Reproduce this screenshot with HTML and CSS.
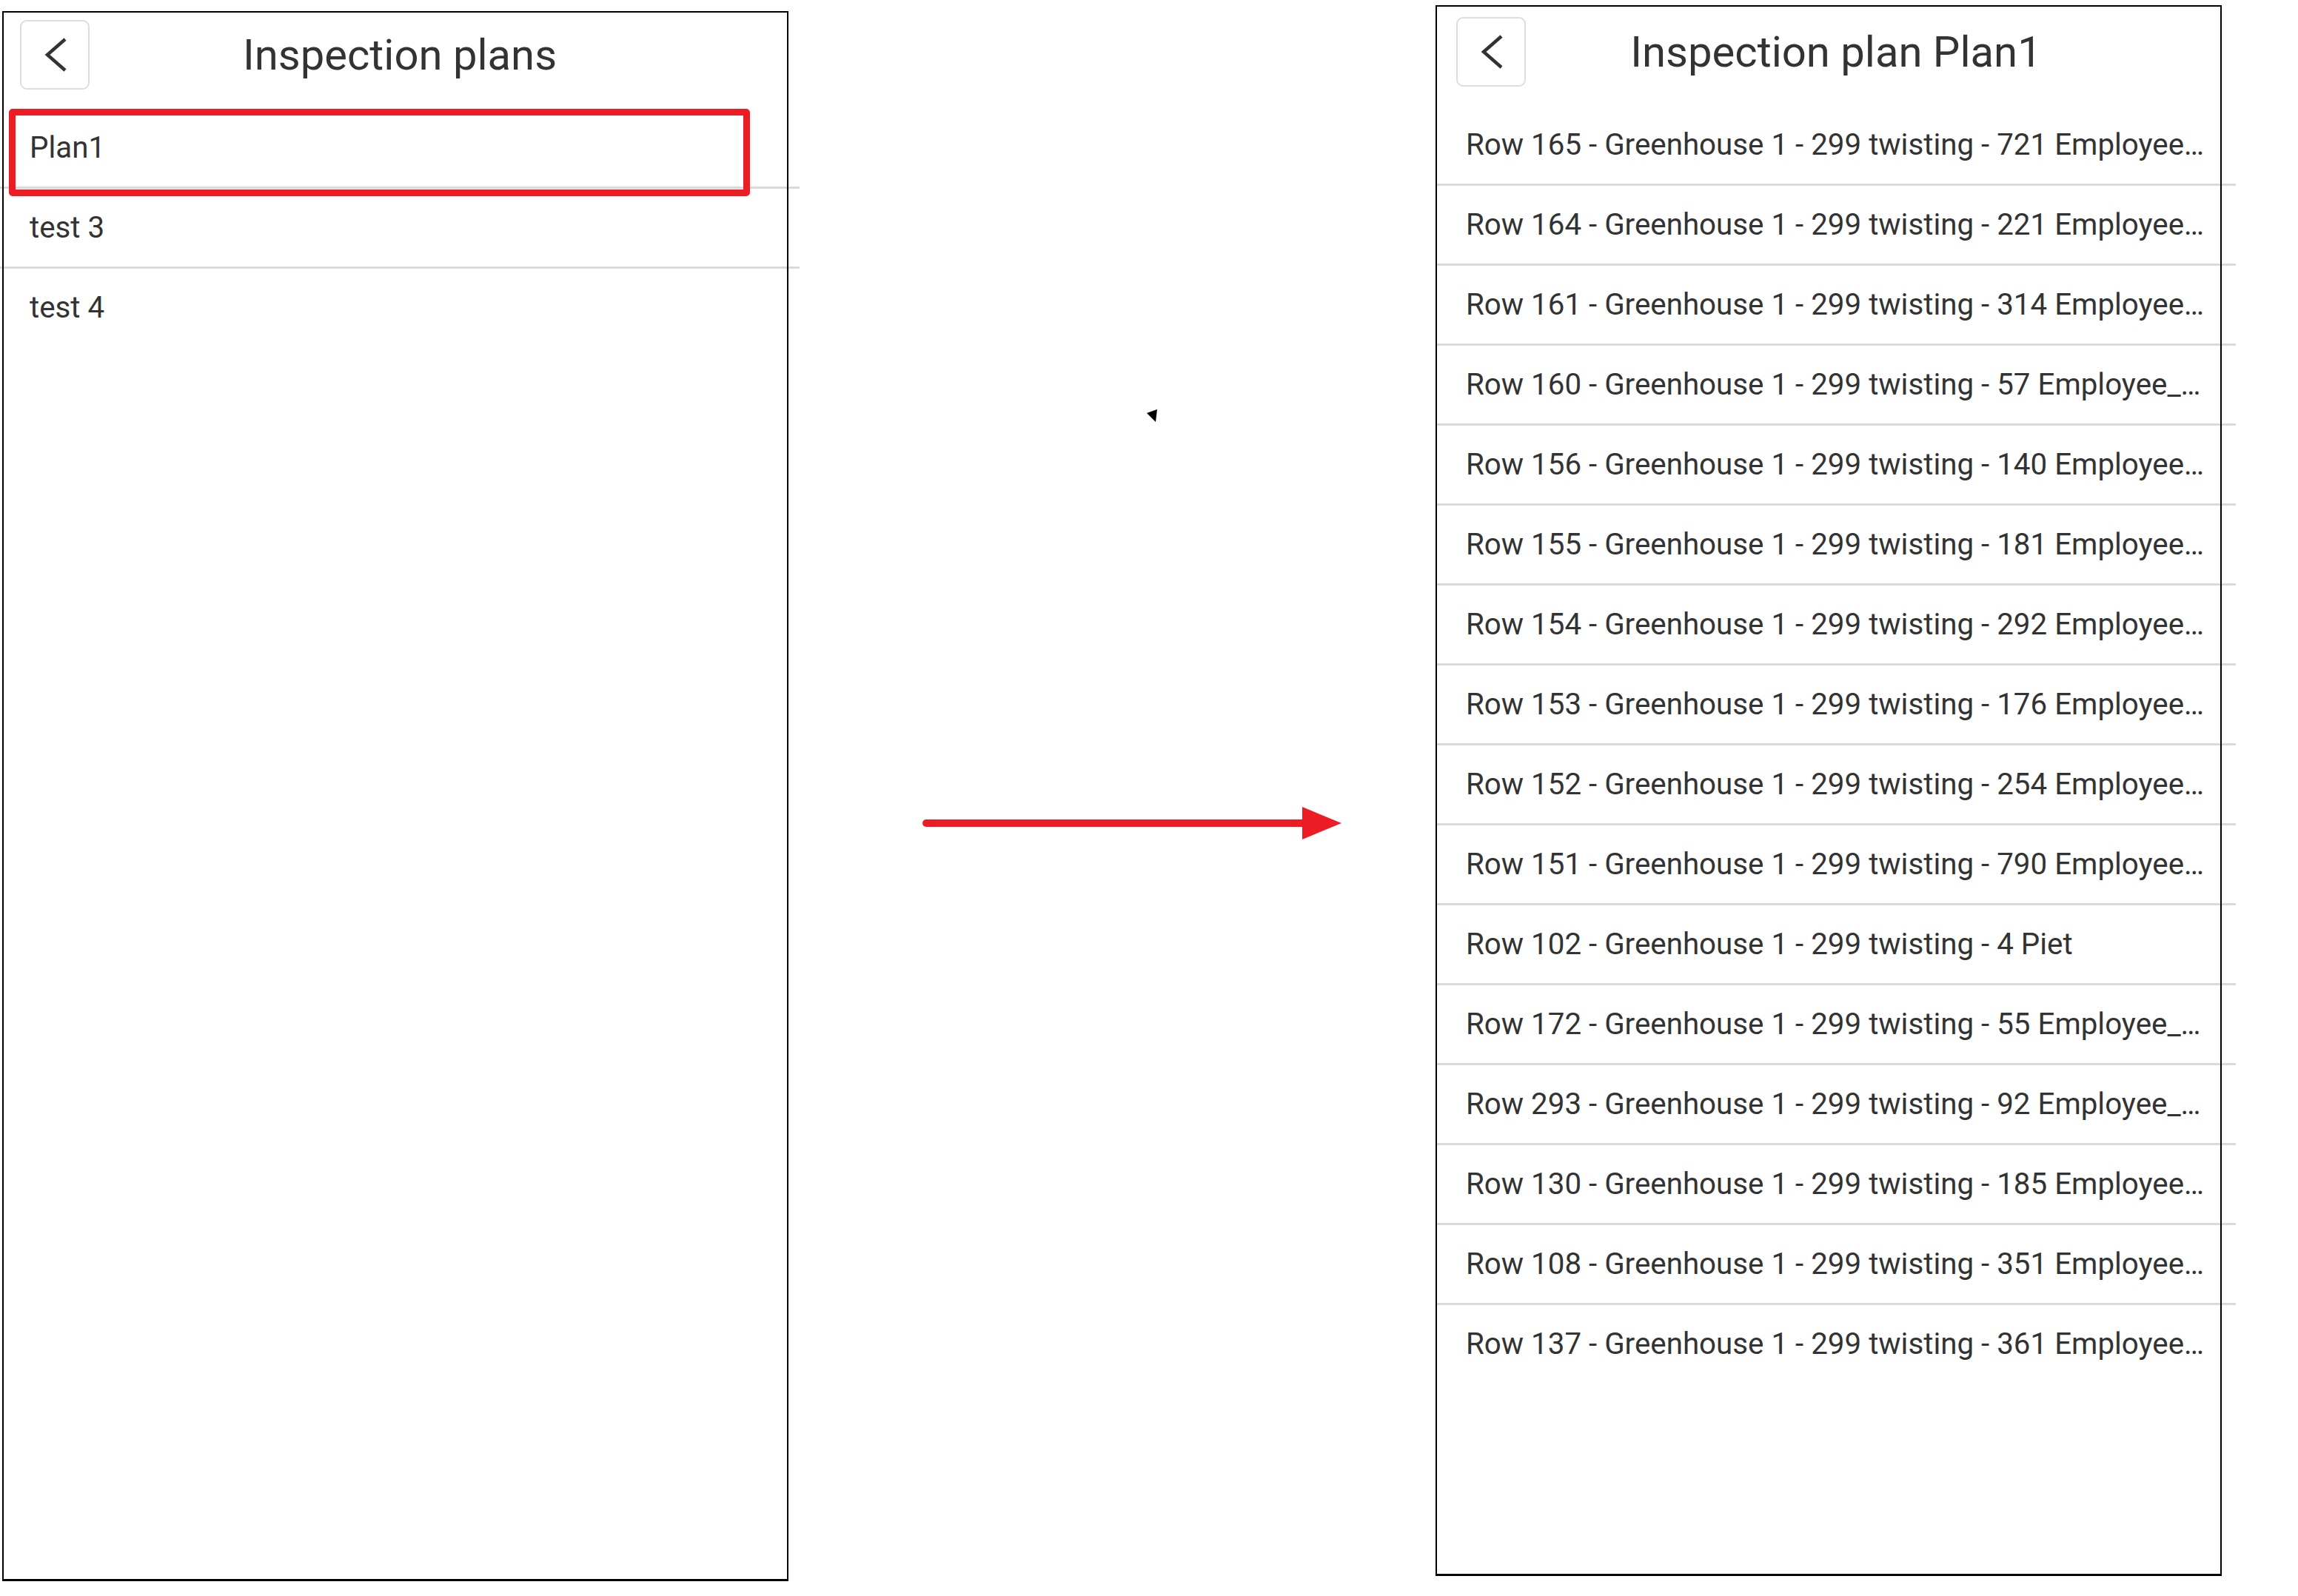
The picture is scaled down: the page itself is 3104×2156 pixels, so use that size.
FILE: index.html
```html
<!DOCTYPE html>
<html lang="en">
<head>
    <meta charset="UTF-8">
    <title>Inspection plans</title>
    <link rel="stylesheet" href="styles.css">
</head>
<body>
    <div class="stage">
        <div class="frame frame-left">
            <div class="screen">
                <div class="header">
                    <button class="back">
                        <svg viewBox="0 0 90 90" width="90" height="90"><polyline points="59,24 35,45 59,66" /></svg>
                    </button>
                    <h1>Inspection plans</h1>
                </div>
                <ul class="list">
                    <li>Plan1</li>
                    <li>test 3</li>
                    <li>test 4</li>
                </ul>
            </div>
            <div class="highlight"></div>
        </div>

        <div class="middle">
            <svg class="cursor" viewBox="0 0 14 17" width="14" height="17"><polygon points="0,5 14,0 12,17" /></svg>
            <svg class="arrow" viewBox="0 0 566 44" width="566" height="44">
                <line x1="5" y1="22" x2="516" y2="22" />
                <polygon points="513,0 513,44 566,22" />
            </svg>
        </div>

        <div class="frame frame-right">
            <div class="screen">
                <div class="header">
                    <button class="back">
                        <svg viewBox="0 0 90 90" width="90" height="90"><polyline points="59,24 35,45 59,66" /></svg>
                    </button>
                    <h1>Inspection plan Plan1</h1>
                </div>
                <ul class="list">
                    <li>Row 165 - Greenhouse 1 - 299 twisting - 721 Employee_721 Jansen</li>
                    <li>Row 164 - Greenhouse 1 - 299 twisting - 221 Employee_221 Jansen</li>
                    <li>Row 161 - Greenhouse 1 - 299 twisting - 314 Employee_314 Jansen</li>
                    <li>Row 160 - Greenhouse 1 - 299 twisting - 57 Employee_57 Jansen</li>
                    <li>Row 156 - Greenhouse 1 - 299 twisting - 140 Employee_140 Jansen</li>
                    <li>Row 155 - Greenhouse 1 - 299 twisting - 181 Employee_181 Jansen</li>
                    <li>Row 154 - Greenhouse 1 - 299 twisting - 292 Employee_292 Jansen</li>
                    <li>Row 153 - Greenhouse 1 - 299 twisting - 176 Employee_176 Jansen</li>
                    <li>Row 152 - Greenhouse 1 - 299 twisting - 254 Employee_254 Jansen</li>
                    <li>Row 151 - Greenhouse 1 - 299 twisting - 790 Employee_790 Jansen</li>
                    <li>Row 102 - Greenhouse 1 - 299 twisting - 4 Piet</li>
                    <li>Row 172 - Greenhouse 1 - 299 twisting - 55 Employee_55 Jansen</li>
                    <li>Row 293 - Greenhouse 1 - 299 twisting - 92 Employee_92 Jansen</li>
                    <li>Row 130 - Greenhouse 1 - 299 twisting - 185 Employee_185 Jansen</li>
                    <li>Row 108 - Greenhouse 1 - 299 twisting - 351 Employee_351 Jansen</li>
                    <li>Row 137 - Greenhouse 1 - 299 twisting - 361 Employee_361 Jansen</li>
                </ul>
            </div>
        </div>
    </div>
</body>
</html>
```

FILE: styles.css
```css
body {
    margin: 0;
    background-color: #fff;
    font-family: Roboto, "Liberation Sans", sans-serif;
    color: #333;
}

.stage {
    display: flex;
    align-items: flex-start;
}

/* phone screenshot with a black frame drawn over it */
.frame {
    position: relative;
    width: 1062px;
    height: 2121px;
    box-sizing: border-box;
    padding: 2px;
    flex-shrink: 0;
}

.frame::after {
    content: "";
    position: absolute;
    inset: 0;
    border: 2px solid #000;
    border-bottom-width: 3px;
    pointer-events: none;
}

.frame-left {
    margin: 15px 0 0 3px;
}

.frame-right {
    margin-top: 7px;
    height: 2122px;
}

.screen {
    width: 1080px;
}

.frame-left .screen {
    margin-left: -5px;
}

.frame-right .screen {
    margin: 4px 0 0 -1px;
}

.header {
    display: grid;
    grid-template-columns: 94px 1fr 94px;
    align-items: center;
    align-content: start;
    height: 130px;
    box-sizing: border-box;
    padding: 10px 27px 0;
}

.back {
    width: 94px;
    height: 94px;
    padding: 0;
    background: #fff;
    border: 2px solid #ddd;
    border-radius: 9px;
    display: flex;
    align-items: center;
    justify-content: center;
}

.back polyline {
    fill: none;
    stroke: #333;
    stroke-width: 4.5;
}

h1 {
    margin: 0;
    font-size: 58px;
    font-weight: 400;
    text-align: center;
    white-space: nowrap;
}

.list {
    list-style: none;
    margin: 0;
    padding: 0;
}

.list li {
    height: 105px;
    line-height: 105px;
    font-size: 40.3px;
    padding: 0 28px 0 40px;
    border-bottom: 3px solid #dadada;
    white-space: nowrap;
    overflow: hidden;
    text-overflow: ellipsis;
}

.list li:last-child {
    border-bottom: none;
}

.highlight {
    position: absolute;
    left: 9px;
    top: 132px;
    width: 1001px;
    height: 118px;
    box-sizing: border-box;
    border: 9px solid #ed1c24;
    border-radius: 5px;
}

.middle {
    position: relative;
    width: 874px;
    flex-shrink: 0;
}

.cursor {
    position: absolute;
    left: 484px;
    top: 553px;
}

.cursor polygon {
    fill: #000;
}

.arrow {
    display: block;
    margin: 1090px 0 0 181px;
}

.arrow line {
    stroke: #ed1c24;
    stroke-width: 10;
    stroke-linecap: round;
}

.arrow polygon {
    fill: #ed1c24;
}
```
